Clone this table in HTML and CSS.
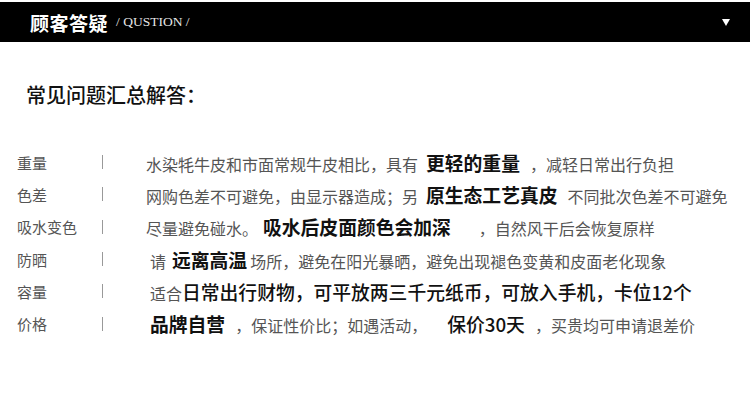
FILE: index.html
```html
<!DOCTYPE html>
<html lang="zh-CN">
<head>
    <meta charset="UTF-8">
    <meta name="viewport" content="width=device-width, initial-scale=1.0">
    <title>顾客答疑</title>
    <link rel="stylesheet" href="styles.css">
</head>
<body>

    <!-- Section header -->
    <div class="bar">
        <span class="bar-title">顾客答疑</span>
        <span class="bar-sub">/ QUSTION /</span>
        <svg class="bar-arrow" width="8" height="7" viewBox="0 0 8 7"><polygon points="0,0 8,0 4,7" fill="#fff"/></svg>
    </div>

    <h2 class="faq-title">常见问题汇总解答：</h2>

    <!-- FAQ rows -->
    <div class="faq">
        <div class="row">
            <span class="label">重量</span>
            <span class="sep"></span>
            <p class="text">水染牦牛皮和市面常规牛皮相比，具有<b class="hl gap1">更轻的重量</b>，减轻日常出行负担</p>
        </div>
        <div class="row">
            <span class="label">色差</span>
            <span class="sep"></span>
            <p class="text">网购色差不可避免，由显示器造成；另<b class="hl gap1">原生态工艺真皮</b>不同批次色差不可避免</p>
        </div>
        <div class="row">
            <span class="label">吸水变色</span>
            <span class="sep"></span>
            <p class="text">尽量避免碰水。<b class="hl gap2">吸水后皮面颜色会加深</b>，自然风干后会恢复原样</p>
        </div>
        <div class="row">
            <span class="label">防晒</span>
            <span class="sep"></span>
            <p class="text indent">请<b class="hl gap3">远离高温</b>场所，避免在阳光暴晒，避免出现褪色变黄和皮面老化现象</p>
        </div>
        <div class="row">
            <span class="label">容量</span>
            <span class="sep"></span>
            <p class="text indent">适合<b class="hl medium">日常出行财物，可平放两三千元纸币，可放入手机，卡位12个</b></p>
        </div>
        <div class="row">
            <span class="label">价格</span>
            <span class="sep"></span>
            <p class="text indent"><b class="hl gap4">品牌自营</b>，保证性价比；如遇活动，<b class="hl medium gap5">保价30天</b>，买贵均可申请退差价</p>
        </div>
    </div>

</body>
</html>
```

FILE: styles.css
```css
body {
    font-family: "Noto Sans CJK SC", "Liberation Sans", sans-serif;
    margin: 0;
    padding: 0;
    background-color: #fff;
    width: 750px;
}
.bar {
    display: flex;
    align-items: center;
    height: 40px;
    margin-top: 2px;
    padding-left: 30px;
    background: #000;
    color: #fff;
}
.bar-title {
    font-size: 19px;
    font-weight: bold;
    letter-spacing: 0.5px;
}
.bar-sub {
    margin-left: 8px;
    font-family: "Liberation Serif", serif;
    font-size: 13.5px;
    color: #e6e6e6;
}
.bar-arrow {
    margin-left: auto;
    margin-right: 20px;
}
.faq-title {
    margin: 40px 0 0 26px;
    font-size: 20px;
    font-weight: 500;
    line-height: 26px;
    color: #111;
}
.faq {
    margin-top: 38px;
}
.row {
    display: flex;
    align-items: center;
    height: 32.3px;
}
.label {
    width: 85px;
    padding-left: 17px;
    font-size: 15px;
    color: #555;
}
.sep {
    width: 1px;
    height: 14px;
    margin-right: 43px;
    background: #999;
}
.text {
    margin: 0;
    font-size: 16px;
    color: #555;
    white-space: nowrap;
}
.text.indent {
    padding-left: 4px;
}
.hl {
    font-size: 18.8px;
    font-weight: bold;
    color: #111;
}
.hl.medium {
    font-weight: 500;
}
.gap1 {
    margin: 0 10px 0 8px;
}
.gap2 {
    margin: 0 28px 0 5px;
}
.gap3 {
    margin: 0 3px 0 6px;
}
.gap4 {
    margin-right: 10px;
}
.gap5 {
    margin: 0 10px 0 20px;
}
```
